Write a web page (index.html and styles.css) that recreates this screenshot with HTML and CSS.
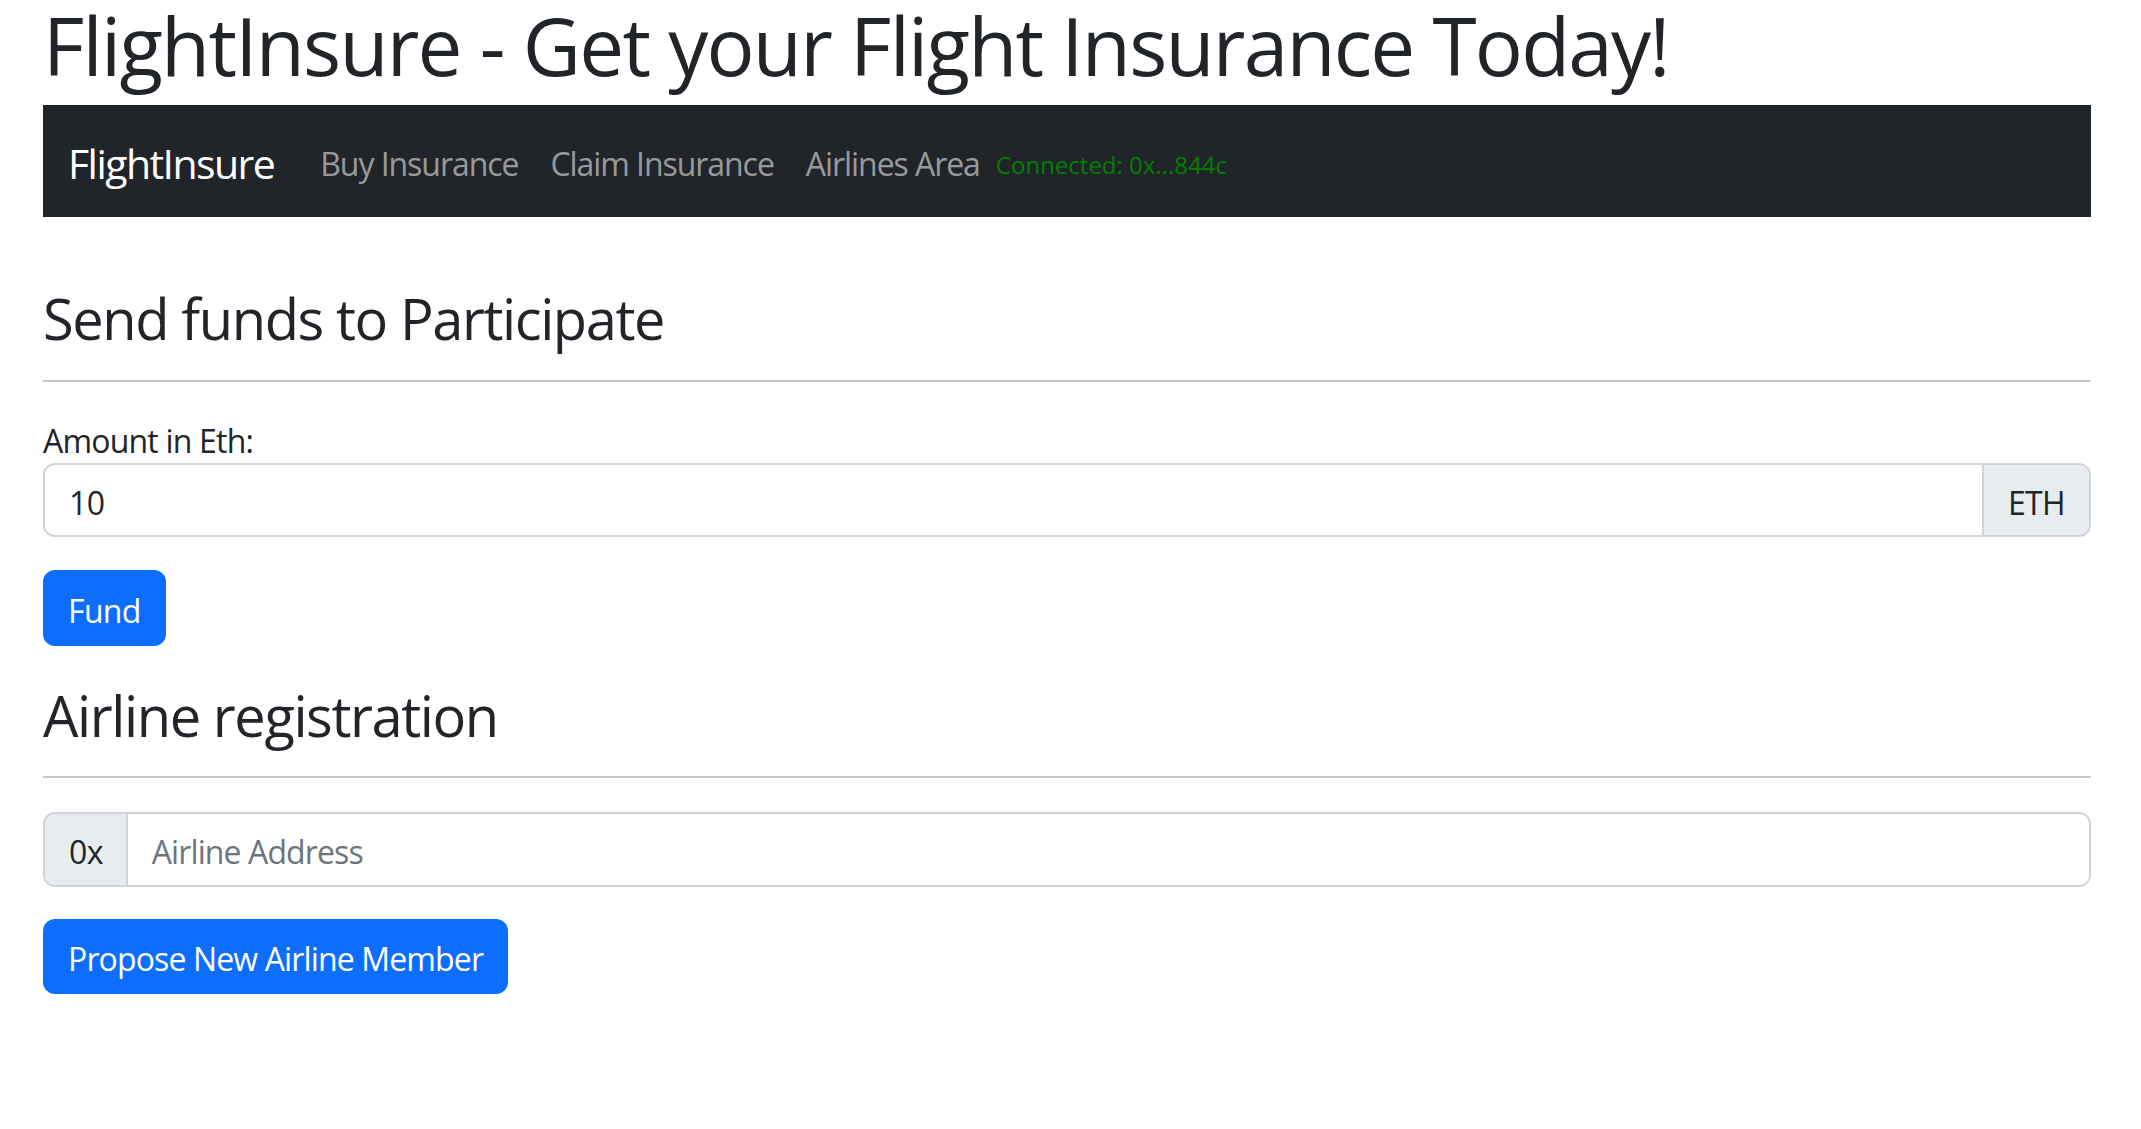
FILE: index.html
```html
<!DOCTYPE html>
<html lang="en">
<head>
<meta charset="utf-8">
<title>FlightInsure</title>
<link rel="stylesheet" href="styles.css">
</head>
<body>
<div class="page">
  <h1 class="title">FlightInsure - Get your Flight Insurance Today!</h1>
  <nav class="navbar">
    <a class="brand" href="#">FlightInsure</a>
    <ul class="nav">
      <li><a class="nav-link" href="#">Buy Insurance</a></li>
      <li><a class="nav-link" href="#">Claim Insurance</a></li>
      <li><a class="nav-link" href="#">Airlines Area</a></li>
    </ul>
    <span class="connected">Connected: 0x...844c</span>
  </nav>

  <section class="section">
    <h3 class="heading first">Send funds to Participate</h3>
    <hr class="rule">
    <label class="label" for="amount">Amount in Eth:</label>
    <div class="input-group">
      <input class="control" id="amount" type="text" value="10">
      <span class="addon addon-end">ETH</span>
    </div>
    <button class="btn btn-fund" type="button">Fund</button>
  </section>

  <section class="section">
    <h3 class="heading">Airline registration</h3>
    <hr class="rule">
    <div class="input-group input-group-2">
      <span class="addon addon-start">0x</span>
      <input class="control control-address" type="text" placeholder="Airline Address">
    </div>
    <button class="btn btn-propose" type="button">Propose New Airline Member</button>
  </section>
</div>
</body>
</html>
```

FILE: styles.css
```css
* {
  box-sizing: border-box;
}

body {
  margin: 0;
  background: #ffffff;
  color: #212529;
  font-family: "Open Sans", "Noto Sans", sans-serif;
}

.page {
  width: 2048px;
  margin-left: 43px;
}

.title {
  margin: 2px 0 17px;
  font-size: 80px;
  font-weight: 400;
  line-height: 86px;
  letter-spacing: -0.022em;
}

.navbar {
  display: flex;
  align-items: center;
  height: 112px;
  padding: 5px 25px 0;
  background: #212529;
}

.brand {
  margin-right: 30px;
  color: #ffffff;
  font-size: 41px;
  line-height: 1.5;
  letter-spacing: -0.038em;
  text-decoration: none;
}

.nav {
  display: flex;
  margin: 0;
  padding: 0;
  list-style: none;
}

.nav-link {
  display: block;
  padding: 0 16px;
  color: rgba(255, 255, 255, 0.55);
  font-size: 32px;
  line-height: 1.5;
  letter-spacing: -0.033em;
  text-decoration: none;
}

.connected {
  padding-top: 3px;
  color: #008000;
  font-size: 24px;
  line-height: 1.5;
  letter-spacing: 0;
}

.section {
  display: flex;
  flex-direction: column;
  align-items: flex-start;
}

.heading {
  margin: 35px 0 0;
  font-size: 56px;
  font-weight: 400;
  line-height: 68px;
  letter-spacing: -0.025em;
}

.heading.first {
  margin-top: 67px;
}

.rule {
  align-self: stretch;
  height: 2px;
  margin: 27px 0 0;
  border: 0;
  background: #c8c9ca;
}

.heading.first + .rule {
  margin-top: 28px;
}

.label {
  margin-top: 33px;
  padding-top: 4px;
  font-size: 32px;
  line-height: 44px;
  letter-spacing: -0.025em;
}

.input-group {
  display: flex;
  align-self: stretch;
  height: 74px;
  border: 2px solid #ced4da;
  border-radius: 12px;
  overflow: hidden;
}

.input-group-2 {
  height: 75px;
  margin-top: 34px;
}

.control {
  flex: 1;
  min-width: 0;
  padding: 4px 24px 0;
  border: 0;
  outline: none;
  background: #ffffff;
  color: #212529;
  font-family: inherit;
  font-size: 32px;
  letter-spacing: -0.02em;
}

.control-address {
  letter-spacing: -0.028em;
}

.control::placeholder {
  color: #6c757d;
}

.addon {
  display: flex;
  align-items: center;
  padding: 4px 24px 0;
  background: #e9ecef;
  color: #212529;
  font-size: 32px;
  letter-spacing: -0.02em;
}

.addon-end {
  border-left: 2px solid #ced4da;
}

.addon-start {
  padding-right: 23px;
  border-right: 2px solid #ced4da;
}

.btn {
  margin-top: 33px;
  height: 76px;
  padding: 4px 25px 0;
  border: 0;
  border-radius: 12px;
  background: #0d6efd;
  color: #ffffff;
  font-family: inherit;
  font-size: 32px;
  letter-spacing: -0.02em;
}

.btn-propose {
  height: 75px;
  margin-top: 32px;
  letter-spacing: -0.027em;
}
```
